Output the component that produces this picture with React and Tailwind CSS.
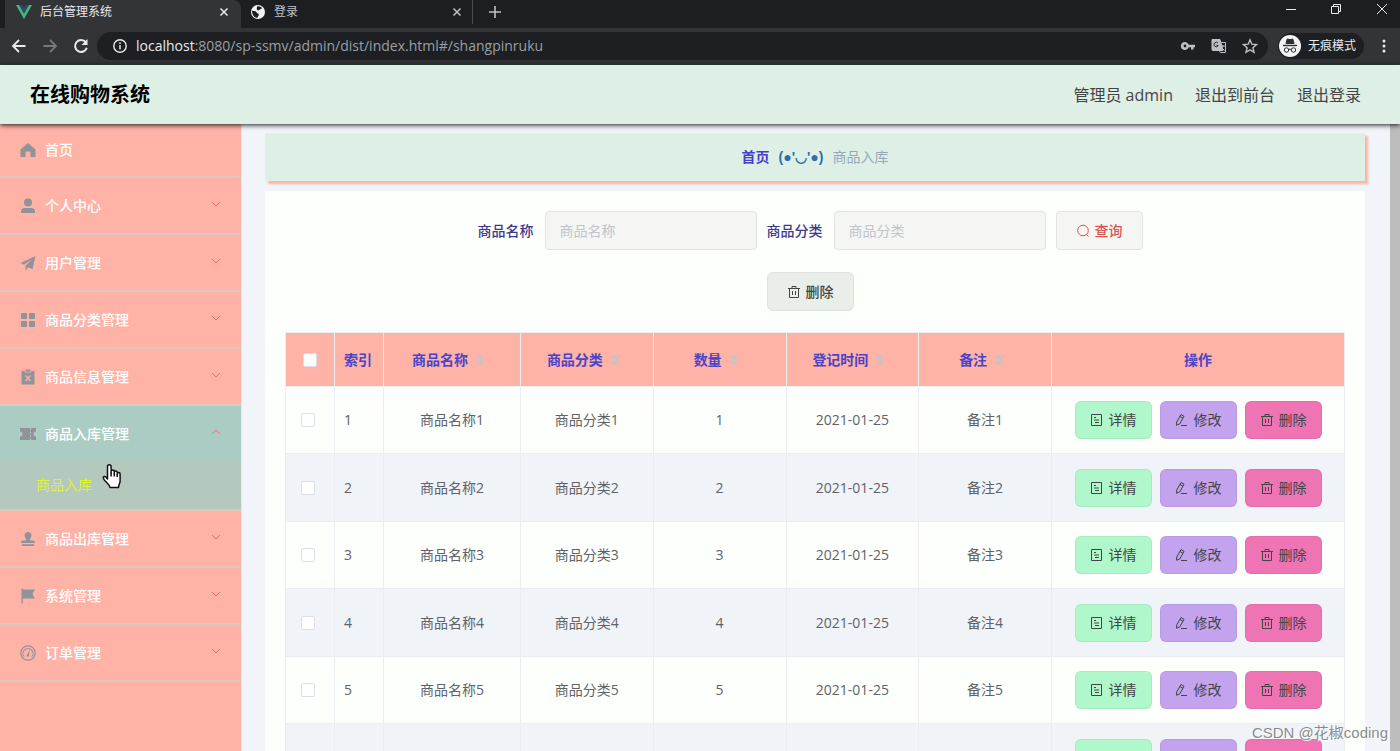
import clsx from 'clsx';

const menuItems = [
  { label: '首页', icon: 'home' },
  { label: '个人中心', icon: 'user' },
  { label: '用户管理', icon: 'plane' },
  { label: '商品分类管理', icon: 'grid' },
  { label: '商品信息管理', icon: 'clipboard' },
  { label: '商品入库管理', icon: 'ticket', children: ['商品入库'] },
  { label: '商品出库管理', icon: 'stamp' },
  { label: '系统管理', icon: 'flag' },
  { label: '订单管理', icon: 'gauge' },
];

const columns = ['商品名称', '商品分类', '数量', '登记时间', '备注'];

const rows = [1, 2, 3, 4, 5, 6].map((n) => ({
  id: n,
  cells: [`商品名称${n}`, `商品分类${n}`, `${n}`, '2021-01-25', `备注${n}`],
}));

const menuIcons = {
  home: <path d="M8 1 15.5 7.5V15h-5v-4.5a1 1 0 0 0-1-1h-3a1 1 0 0 0-1 1V15h-5V7.5z" />,
  user: (
    <>
      <circle cx="8" cy="4.5" r="4" />
      <path d="M1 15v-1.5C1 11 2.5 10 4.500 10h7c2 0 3.500 1 3.500 3.500V15z" />
    </>
  ),
  plane: <path d="M15.500 1 .5 8l3.500 1.800L12.500 4 5.500 10.800V15.500l2.800-3.200 4.200 2z" />,
  grid: (
    <>
      <rect x="1" y="1" width="6" height="6" rx="1" />
      <rect x="9" y="1" width="6" height="6" rx="1" />
      <rect x="1" y="9" width="6" height="6" rx="1" />
      <rect x="9" y="9" width="6" height="6" rx="1" />
    </>
  ),
  clipboard: (
    <>
      <path d="M1.500 2h3.200v1.600h6.600V2h3.200v13.500h-13z" />
      <path d="M5.500.5h5v2.200h-5z" />
      <path d="m5.500 6.500 5 5.500m0-5.500-5 5.500" stroke="#ffb2a6" strokeWidth="1.200" fill="none" />
    </>
  ),
  ticket: (
    <>
      <path d="M0 2h16v3.500a2.500 2.500 0 0 0 0 5V14H0v-3.500a2.500 2.500 0 0 0 0-5z" />
      <path d="M10.500 2v12" stroke="#aaccc2" strokeWidth="1" strokeDasharray="2 1.500" />
    </>
  ),
  stamp: (
    <>
      <path d="M8 1a3.500 3.500 0 0 1 3 5.300c-.8 1.200-1 2.200-.8 3.200H13c1.500 0 2 1 2 2.500H1c0-1.500.5-2.500 2-2.500h2.800c.2-1 0-2-.8-3.200A3.500 3.500 0 0 1 8 1z" />
      <path d="M2 13.200h12V15H2z" />
    </>
  ),
  flag: <path d="M1.500.5h1.300v1H15L12.500 6 15 10.500H2.800v5H1.500z" />,
  gauge: (
    <>
      <circle cx="8" cy="8" r="7.200" fill="none" stroke="currentColor" strokeWidth="1.300" />
      <path d="M4.300 11.800A5 5 0 1 1 11.700 11.800" fill="none" stroke="currentColor" strokeWidth="1.100" />
      <path d="M9.800 4.500 9 9.800a1.300 1.300 0 1 1-1.500-.6z" />
    </>
  ),
};

const MenuIcon = ({ name }) => (
  <svg className="w-4 h-4 shrink-0 text-[#909399]" viewBox="0 0 16 16" fill="currentColor">
    {menuIcons[name]}
  </svg>
);

const Chevron = ({ up }) => (
  <svg
    className={clsx('w-2.5 h-2.5 mb-1', up && 'rotate-180')}
    viewBox="0 0 10 10"
    fill="none"
    stroke="#ee6b6b"
  >
    <path d="m1 3 4 4 4-4" />
  </svg>
);

const TrashIcon = () => (
  <svg className="w-3.5 h-3.5" viewBox="0 0 14 14" fill="none" stroke="currentColor">
    <path d="M1 3.500h12M2.500 3.500v9h9v-9M5 3.500v-2h4v2M5.500 6v4M8.500 6v4" />
  </svg>
);

const DocumentIcon = () => (
  <svg className="w-3.5 h-3.5" viewBox="0 0 14 14" fill="none" stroke="currentColor">
    <path d="M1.500 1.500h10v11h-10zM4 4.500h2M4 7h5M5 9.500h4" />
  </svg>
);

const EditIcon = () => (
  <svg className="w-3.5 h-3.5" viewBox="0 0 14 14" fill="none" stroke="currentColor">
    <path d="m6 1.500 3 1.800-4.300 7.700-3.200 1.200.2-3.200zM5 3.500l3 1.800M6 12.500h6" />
  </svg>
);

const SearchIcon = () => (
  <svg className="w-3.5 h-3.5" viewBox="0 0 14 14" fill="none" stroke="currentColor">
    <circle cx="7" cy="6.500" r="5.300" />
    <path d="m10.500 10.500 2 2" />
  </svg>
);

const SortCaret = () => (
  <span className="inline-flex w-6 justify-center">
    <svg className="w-2.5 h-3.5" viewBox="0 0 10 14" fill="#c0c4cc">
      <path d="M5 1 9 6H1zM5 13 1 8h8z" />
    </svg>
  </span>
);

const CloseIcon = ({ className }) => (
  <svg className={clsx('w-2.5 h-2.5', className)} viewBox="0 0 10 10" fill="none" stroke="currentColor" strokeWidth="1.500">
    <path d="m1.500 1.500 7 7m0-7-7 7" />
  </svg>
);

const TabStrip = () => (
  <div className="flex h-7 bg-[#1d1e21] pl-[5px] text-xs">
    <div className="flex w-[236px] items-start rounded-tr-lg bg-[#323438] pl-[11px] pr-3 text-[#e8eaed]">
      <div className="flex h-6 w-full items-center">
        <svg className="w-4 h-4 mr-2" viewBox="0 0 16 16">
          <path d="M0 1h3.200L8 9.500 12.800 1H16L8 15z" fill="#41b883" />
          <path d="M3.200 1H6l2 3.500L10 1h2.800L8 9.500z" fill="#35495e" />
        </svg>
        <span className="flex-1">后台管理系统</span>
        <button aria-label="关闭">
          <CloseIcon />
        </button>
      </div>
    </div>
    <div className="flex h-6 w-[232px] items-center border-r border-[#4b4d51] pl-[9px] pr-2.5 text-[#bdc1c6]">
      <svg className="w-4 h-4 mr-2" viewBox="0 0 16 16">
        <circle cx="8" cy="8" r="7" fill="#f1f3f4" />
        <path d="M2 6.500c2 1 3.500.2 4.500 1.800.8 1.400 2.500.8 2.300 2.800-.2 1.300-1.300 1.500-1.400 3C4 13.500 1.800 10.500 2 6.500zM7 2.500c1.500-.8 4 0 5 1.500-.5 1.500-2 .8-2.800 2C8.500 7 6.500 6 6.800 4.800z" fill="#1d1e21" />
      </svg>
      <span className="flex-1">登录</span>
      <button aria-label="关闭">
        <CloseIcon />
      </button>
    </div>
    <button aria-label="新标签页" className="flex h-6 w-11 items-center justify-center text-[#bdc1c6]">
      <svg className="w-3 h-3" viewBox="0 0 12 12" stroke="currentColor" strokeWidth="1.600">
        <path d="M6 0v12M0 6h12" />
      </svg>
    </button>
    <div className="ml-auto flex h-[18px] items-center gap-[35px] pr-3 text-[#e8eaed]">
      <button aria-label="最小化">
        <svg className="w-2.5 h-2.5" viewBox="0 0 10 10" stroke="currentColor">
          <path d="M0 5.500h10" />
        </svg>
      </button>
      <button aria-label="还原">
        <svg className="w-2.5 h-2.5" viewBox="0 0 10 10" fill="none" stroke="currentColor">
          <path d="M.5 2.500h7v7h-7zM2.500 2.500v-2h7v7h-2" />
        </svg>
      </button>
      <button aria-label="关闭窗口">
        <svg className="w-3 h-3" viewBox="0 0 12 12" stroke="currentColor">
          <path d="m1 1 10 10M11 1 1 11" />
        </svg>
      </button>
    </div>
  </div>
);

const Toolbar = () => (
  <div className="flex h-[37px] items-center border-b border-[#33443f] bg-[#323438] pl-[11px] pr-2 text-[#e8eaed]">
    <div className="flex items-center gap-[15px]">
      <button aria-label="后退">
        <svg className="w-4 h-4" viewBox="0 0 16 16" fill="none" stroke="currentColor" strokeWidth="1.800">
          <path d="M14.500 8H2m6-6L2 8l6 6" />
        </svg>
      </button>
      <button aria-label="前进" className="text-[#77797c]">
        <svg className="w-4 h-4" viewBox="0 0 16 16" fill="none" stroke="currentColor" strokeWidth="1.800">
          <path d="M1.500 8H14M8 2l6 6-6 6" />
        </svg>
      </button>
      <button aria-label="重新加载">
        <svg className="w-4 h-4" viewBox="0 0 16 16" fill="none" stroke="currentColor" strokeWidth="2">
          <path d="M12.800 4.200A6 6 0 1 0 13.800 9.800" />
          <path d="M14.500 1v6h-6z" fill="currentColor" stroke="none" />
        </svg>
      </button>
    </div>
    <div className="ml-2 flex h-7 flex-1 items-center rounded-full bg-[#1e1f22] pl-[15px] pr-2.5">
      <svg className="w-4 h-4 mr-2 shrink-0" viewBox="0 0 16 16" fill="none" stroke="currentColor" strokeWidth="1.400">
        <circle cx="8" cy="8" r="6.200" />
        <path d="M8 7v4.500M8 4.300v1.600" />
      </svg>
      <span className="flex-1 text-sm text-[#9aa0a6]">
        <span className="text-[#e8eaed]">localhost</span>:8080/sp-ssmv/admin/dist/index.html#/shangpinruku
      </span>
      <div className="flex items-center gap-[15px] text-[#bdc1c6]">
        <svg className="w-4 h-4" viewBox="0 0 16 16" fill="currentColor">
          <path d="M5 4a4 4 0 1 0 3.700 5.300H11V11.500h2.500V9.300H15V6.700H8.700A4 4 0 0 0 5 4zm0 2.600a1.400 1.400 0 1 1 0 2.800 1.400 1.400 0 0 1 0-2.800z" />
        </svg>
        <svg className="w-4 h-4" viewBox="0 0 16 16" fill="none" stroke="currentColor">
          <path d="M1 1.500h8l3 11H2a1 1 0 0 1-1-1z" fill="currentColor" />
          <path d="M10 4.500h4.500v10H9.500l-1.500-2M9.500 8h4.500M12 7v1c-.5 2-1.500 3-2 3.500M10.500 9.500l3 3" />
          <path d="M7 5.200a2.200 2.200 0 1 0 .2 2.300H5.500" stroke="#1e1f22" />
        </svg>
        <svg className="w-4 h-4" viewBox="0 0 16 16" fill="none" stroke="currentColor" strokeWidth="1.400">
          <path d="m8 1.800 1.800 4.400 4.700.4-3.600 3.100 1.100 4.600L8 11.800l-4 2.500 1.100-4.600-3.600-3.100 4.700-.4z" />
        </svg>
      </div>
    </div>
    <div className="ml-2.5 flex h-[26px] items-center rounded-full bg-[#1e1f22] pr-2 text-xs">
      <svg className="w-6 h-6 mr-1.5" viewBox="0 0 24 24" fill="none" stroke="#2b2d30">
        <circle cx="12" cy="12" r="11" fill="#f1f3f4" stroke="none" />
        <path d="m8 9.500 1.200-4.500 2.800.6 2.800-.6L16 9.500z" fill="#2b2d30" />
        <path d="M5 11.500h14" strokeWidth="1.400" />
        <circle cx="8.500" cy="16" r="2.200" />
        <circle cx="15.500" cy="16" r="2.200" />
        <path d="M10.700 15.500q1.300-.8 2.600 0" />
      </svg>
      <span>无痕模式</span>
    </div>
    <button aria-label="菜单" className="ml-3">
      <svg className="w-4 h-4" viewBox="0 0 16 16" fill="currentColor">
        <circle cx="8" cy="3" r="1.500" />
        <circle cx="8" cy="8" r="1.500" />
        <circle cx="8" cy="13" r="1.500" />
      </svg>
    </button>
  </div>
);

const PageHeader = () => (
  <header className="relative z-10 flex h-[59px] shrink-0 items-center justify-between bg-[#deefe6] pl-[30px] pr-[39px] shadow-[0_1px_5px_rgba(0,0,0,0.9)]">
    <h1 className="text-xl font-bold text-black">在线购物系统</h1>
    <div className="flex gap-[22px] text-base text-[#444]">
      <span>管理员 admin</span>
      <a href="#front">退出到前台</a>
      <a href="#logout">退出登录</a>
    </div>
  </header>
);

const Sidebar = () => (
  <nav className="w-[242px] shrink-0 border-r border-[#f3e4e4] bg-[#ffb2a6] text-sm text-white">
    <ul>
      {menuItems.map(({ label, icon, children }, i) => (
        <li key={label} className="border-b-2 border-[#dcc8be]">
          <button
            className={clsx(
              'flex w-full items-center pl-5 pr-5 text-left font-medium',
              i === 0 ? 'h-[52px]' : 'h-[55px]',
              children && 'bg-[#aaccc2]'
            )}
          >
            <MenuIcon name={icon} />
            <span className="ml-[9px] flex-1">{label}</span>
            {i > 0 && <Chevron up={Boolean(children)} />}
          </button>
          {children?.map((child) => (
            <a
              key={child}
              href="#shangpinruku"
              className="flex h-12 items-center bg-[#b5c8be] pl-9 text-[#dcf52c]"
            >
              {child}
            </a>
          ))}
        </li>
      ))}
    </ul>
  </nav>
);

const SearchField = ({ id, label }) => (
  <div className="mr-2.5 flex items-center">
    <label htmlFor={id} className="pr-[11px] font-medium text-[#3d3a8c]">
      {label}
    </label>
    <input
      id={id}
      placeholder={label}
      className="h-[39px] w-[212px] rounded border border-[#e2e3e3] bg-[#f5f5f3] px-3.5 placeholder:text-[#c0c4cc]"
    />
  </div>
);

const SearchForm = () => (
  <form className="text-sm" onSubmit={(e) => e.preventDefault()}>
    <div className="flex justify-center">
      <SearchField id="name" label="商品名称" />
      <SearchField id="category" label="商品分类" />
      <button className="mr-2.5 flex h-[39px] items-center gap-[5px] rounded border border-[#e2e3e3] bg-[#f5f5f3] px-[19px] font-medium text-[#d95555]">
        <SearchIcon />
        查询
      </button>
    </div>
    <div className="mt-[22px] flex justify-center">
      <button
        type="button"
        className="mr-2.5 flex h-[39px] items-center gap-[5px] rounded-md border border-[#dde2de] bg-[#e9eee9] px-[19px] font-medium text-[#444]"
      >
        <TrashIcon />
        删除
      </button>
    </div>
  </form>
);

const ActionButton = ({ icon, className, children }) => (
  <button
    className={clsx(
      'flex h-[38px] items-center gap-[5px] rounded-md border border-black/5 px-3.5 text-[#444]',
      className
    )}
  >
    {icon}
    {children}
  </button>
);

const checkboxClass = 'block h-3.5 w-3.5 appearance-none rounded-xs border border-[#dcdfe6] bg-white';

const GoodsTable = () => (
  <table className="mt-[21px] w-full table-fixed border-collapse text-sm text-[#606266]">
    <colgroup>
      <col className="w-[49px]" />
      <col className="w-[49px]" />
      <col className="w-[137px]" />
      <col />
      <col />
      <col />
      <col />
      <col className="w-[293px]" />
    </colgroup>
    <thead>
      <tr className="h-[54px] bg-[#ffb2a6] text-[#4a44c8]">
        <th className="border border-[#ebeef0] pl-[17px]">
          <input type="checkbox" aria-label="全选" className={checkboxClass} />
        </th>
        <th className="border border-[#ebeef0] pl-[9px] text-left">索引</th>
        {columns.map((name) => (
          <th key={name} className="border border-[#ebeef0]">
            <span className="inline-flex items-center">
              {name}
              <SortCaret />
            </span>
          </th>
        ))}
        <th className="border border-[#ebeef0]">操作</th>
      </tr>
    </thead>
    <tbody>
      {rows.map(({ id, cells }) => (
        <tr key={id} className="odd:h-[67px] even:h-[68px] even:bg-[#f0f3f8]">
          <td className="border border-[#ebeef0] pl-[15px]">
            <input type="checkbox" aria-label={`选择第${id}行`} className={checkboxClass} />
          </td>
          <td className="border border-[#ebeef0] pl-[9px]">{id}</td>
          {cells.map((cell, i) => (
            <td key={columns[i]} className="border border-[#ebeef0] text-center">
              {cell}
            </td>
          ))}
          <td className="border border-[#ebeef0]">
            <div className="flex justify-center gap-2">
              <ActionButton icon={<DocumentIcon />} className="bg-[#b0f7cb]">
                详情
              </ActionButton>
              <ActionButton icon={<EditIcon />} className="bg-[#c3a2ee]">
                修改
              </ActionButton>
              <ActionButton icon={<TrashIcon />} className="bg-[#ef74b4]">
                删除
              </ActionButton>
            </div>
          </td>
        </tr>
      ))}
    </tbody>
  </table>
);

const HandCursor = () => (
  <svg
    className="pointer-events-none absolute left-[102px] top-[463px] z-20 h-[27px] w-5"
    viewBox="0 0 20 27"
    fill="#fff"
    stroke="#111"
    strokeWidth="1.500"
    strokeLinejoin="round"
  >
    <path d="M5.500 16V3.500a1.800 1.800 0 0 1 3.600 0V10V8.500a1.600 1.600 0 0 1 3.200 0V11V9.500a1.500 1.500 0 0 1 3 0V12v-1a1.400 1.400 0 0 1 2.800 0v7c0 2.500-1.600 3.500-1.600 6.500H8C7.500 21 3 19 1.500 15.500c-.8-2 1.500-2.800 2.600-1.200z" />
    <path d="M9.100 9.500v4M12.300 10.500v3M15.300 11.500v2.500" />
  </svg>
);

export default function App() {
  return (
    <div className="relative flex h-screen flex-col overflow-hidden font-['Open_Sans','Noto_Sans_CJK_SC',sans-serif]">
      <TabStrip />
      <Toolbar />
      <PageHeader />
      <div className="flex min-h-0 flex-1">
        <Sidebar />
        <main className="min-w-0 flex-1 overflow-hidden bg-[#f1f5f9] pl-[23px] pr-[25px] pt-[9px]">
          <div className="flex h-12 items-center justify-center gap-[9px] bg-[#deefe6] text-sm shadow-[3px_3px_2px_#ffb2a6]">
            <a href="#home" className="font-bold text-[#4340cc]">
              首页
            </a>
            <span className="font-['Liberation_Sans',sans-serif] font-bold text-[#2f6fa8]">(●'◡'●)</span>
            <span className="text-[#97a8be]">商品入库</span>
          </div>
          <div className="mt-2.5 bg-[#fdfffd] px-5 pt-5">
            <SearchForm />
            <GoodsTable />
          </div>
        </main>
        <div className="w-2.5 shrink-0 bg-[#bcbdbc]" />
      </div>
      <HandCursor />
      <div className="absolute bottom-1.5 right-3 z-20 font-['Liberation_Sans','Noto_Sans_CJK_SC',sans-serif] text-[15px] leading-6 text-[#8c8c8c] [text-shadow:1px_1px_0_#fff]">
        CSDN @花椒coding
      </div>
    </div>
  );
}
